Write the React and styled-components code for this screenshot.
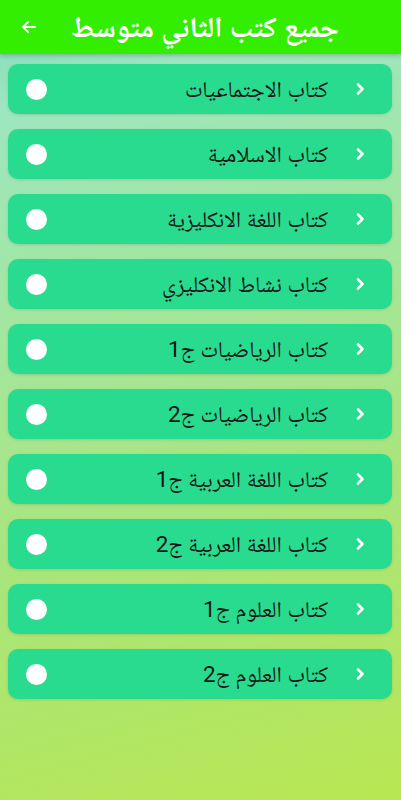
import React from "react";
import styled, { createGlobalStyle } from "styled-components";

const Global = createGlobalStyle`
  html, body { margin: 0; padding: 0; }
  body { font-family: Roboto, "Noto Naskh Arabic", "DejaVu Sans", sans-serif; }
`;

const Page = styled.div`
  width: 401px;
  height: 800px;
  overflow: hidden;
  display: flex;
  flex-direction: column;
  background: linear-gradient(165deg, #78dbb9 0%, #9ee6c0 12%, #a4e69a 40%, #a9e57a 65%, #b8e752 100%);
`;

const AppBar = styled.header`
  height: 54px;
  flex-shrink: 0;
  background: #33ee00;
  display: flex;
  align-items: center;
  padding: 0 62px 0 18px;
  box-shadow: 0 2px 4px rgba(0, 0, 0, 0.18);
  position: relative;
  z-index: 1;
`;

const BackBtn = styled.div`
  width: 22px;
  height: 22px;
  display: flex;
  align-items: center;
  justify-content: center;
`;

const Title = styled.h1`
  flex: 1;
  margin: 0;
  direction: rtl;
  text-align: right;
  white-space: nowrap;
  color: #ffffff;
  font-size: 29px;
  font-weight: bold;
  font-family: Roboto, "Noto Naskh Arabic", "DejaVu Sans", sans-serif;
  line-height: 1;
`;

const List = styled.div`
  display: flex;
  flex-direction: column;
  gap: 15px;
  padding: 10px 9px 0 8px;
`;

const Card = styled.div`
  height: 50px;
  border-radius: 10px;
  background: #29db8f;
  box-shadow: 0 1px 3px rgba(0, 0, 0, 0.12);
  display: flex;
  align-items: center;
  padding: 0 27px 0 18px;
`;

const Dot = styled.span`
  width: 21px;
  height: 21px;
  border-radius: 50%;
  background: #ffffff;
  flex-shrink: 0;
`;

const Label = styled.span`
  flex: 1;
  direction: rtl;
  text-align: right;
  white-space: nowrap;
  font-size: 22.5px;
  line-height: 1;
  color: #151515;
  font-family: Roboto, "Noto Naskh Arabic", "DejaVu Sans", sans-serif;
`;

const Chevron = styled.svg`
  width: 10px;
  height: 14px;
  margin-left: 27px;
  flex-shrink: 0;
`;

const items = [
  "كتاب الاجتماعيات",
  "كتاب الاسلامية",
  "كتاب اللغة الانكليزية",
  "كتاب نشاط الانكليزي",
  "كتاب الرياضيات ج1",
  "كتاب الرياضيات ج2",
  "كتاب اللغة العربية ج1",
  "كتاب اللغة العربية ج2",
  "كتاب العلوم ج1",
  "كتاب العلوم ج2",
];

export default function App() {
  return (
    <Page>
      <Global />
      <AppBar>
        <BackBtn>
          <svg width="18" height="18" viewBox="0 0 24 24" fill="none" stroke="#fff" strokeWidth="2.4" strokeLinecap="round" strokeLinejoin="round">
            <path d="M20 12H5" />
            <path d="M11 5l-7 7 7 7" />
          </svg>
        </BackBtn>
        <Title>جميع كتب الثاني متوسط</Title>
      </AppBar>
      <List>
        {items.map((t) => (
          <Card key={t}>
            <Dot />
            <Label>{t}</Label>
            <Chevron viewBox="0 0 10 14" fill="none" stroke="#fff" strokeWidth="2.6" strokeLinecap="round" strokeLinejoin="round">
              <path d="M3 2.5l4.5 4.5L3 11.5" />
            </Chevron>
          </Card>
        ))}
      </List>
    </Page>
  );
}
